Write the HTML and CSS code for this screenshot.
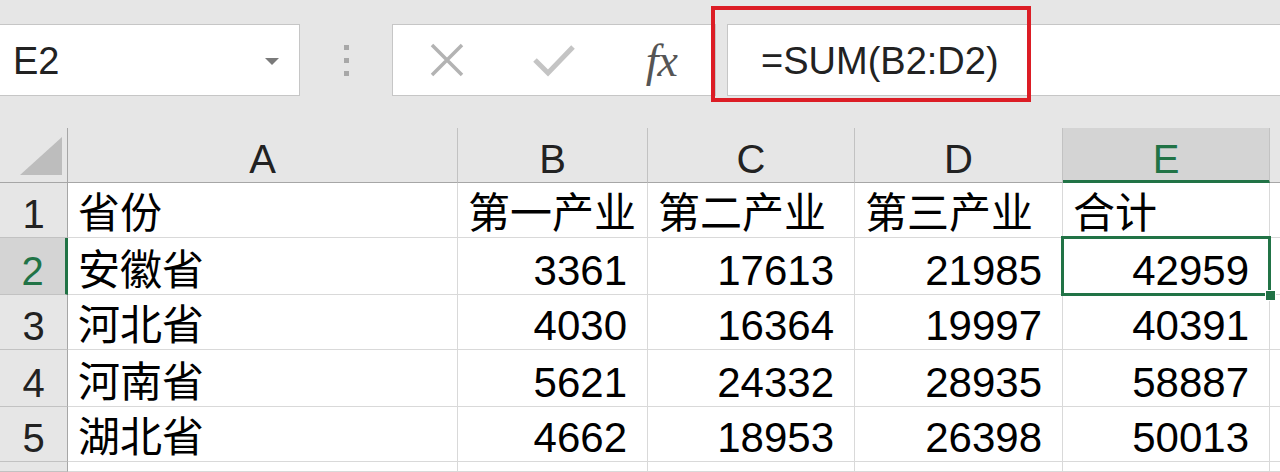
FILE: index.html
```html
<!DOCTYPE html>
<html lang="zh">
<head>
    <meta charset="UTF-8">
    <title>Excel - SUM</title>
    <link rel="stylesheet" href="styles.css">
</head>
<body>
    <div class="formula-bar">
        <div class="name-box">
            <span>E2</span>
            <span class="caret"></span>
        </div>
        <div class="grip"><i></i><i></i><i></i></div>
        <div class="fx-box">
            <div class="slot">
                <svg width="36" height="36" viewBox="0 0 36 36">
                    <path d="M3 3 L33 33 M33 3 L3 33" stroke="#b3b3b3" stroke-width="3.5" fill="none"/>
                </svg>
            </div>
            <div class="slot">
                <svg width="44" height="34" viewBox="0 0 44 34">
                    <path d="M3 17 L16 30 L41 4" stroke="#c4c4c4" stroke-width="5" fill="none"/>
                </svg>
            </div>
            <div class="slot"><span class="fx">fx</span></div>
        </div>
        <div class="formula-input">
            <span class="formula">=SUM(B2:D2)</span>
        </div>
        <div class="highlight"></div>
    </div>

    <div class="sheet">
        <div class="hd corner">
            <svg width="42" height="38" viewBox="0 0 42 38"><path d="M42 0 L42 38 L0 38 Z" fill="#bdbdbd"/></svg>
        </div>
        <div class="hd col">A</div>
        <div class="hd col">B</div>
        <div class="hd col">C</div>
        <div class="hd col">D</div>
        <div class="hd col col-sel">E</div>
        <div class="hd col"></div>

        <div class="hd row">1</div>
        <div class="cell">省份</div>
        <div class="cell">第一产业</div>
        <div class="cell">第二产业</div>
        <div class="cell">第三产业</div>
        <div class="cell">合计</div>
        <div class="cell"></div>

        <div class="hd row row-sel">2</div>
        <div class="cell">安徽省</div>
        <div class="cell num">3361</div>
        <div class="cell num">17613</div>
        <div class="cell num">21985</div>
        <div class="cell num active">42959</div>
        <div class="cell"></div>

        <div class="hd row">3</div>
        <div class="cell">河北省</div>
        <div class="cell num">4030</div>
        <div class="cell num">16364</div>
        <div class="cell num">19997</div>
        <div class="cell num">40391</div>
        <div class="cell"></div>

        <div class="hd row">4</div>
        <div class="cell">河南省</div>
        <div class="cell num">5621</div>
        <div class="cell num">24332</div>
        <div class="cell num">28935</div>
        <div class="cell num">58887</div>
        <div class="cell"></div>

        <div class="hd row">5</div>
        <div class="cell">湖北省</div>
        <div class="cell num">4662</div>
        <div class="cell num">18953</div>
        <div class="cell num">26398</div>
        <div class="cell num">50013</div>
        <div class="cell"></div>

        <div class="hd row"></div>
        <div class="cell"></div>
        <div class="cell"></div>
        <div class="cell"></div>
        <div class="cell"></div>
        <div class="cell"></div>
        <div class="cell"></div>
    </div>
</body>
</html>
```

FILE: styles.css
```css
body {
    margin: 0;
    width: 1280px;
    height: 472px;
    overflow: hidden;
    background: #fff;
    font-family: "Liberation Sans", "Noto Sans CJK SC", sans-serif;
    color: #000;
}

/* formula bar */
.formula-bar {
    position: relative;
    display: flex;
    height: 128px;
    box-sizing: border-box;
    padding: 24px 0 32px;
    background: #e6e6e6;
}

.name-box {
    width: 300px;
    box-sizing: border-box;
    background: #fff;
    border: 1px solid #c6c6c6;
    border-left: none;
    display: flex;
    align-items: center;
    justify-content: space-between;
    padding: 2px 20px 0 13px;
    font-size: 38px;
    color: #222;
}

.caret {
    width: 0;
    height: 0;
    border-left: 7px solid transparent;
    border-right: 7px solid transparent;
    border-top: 7px solid #7a7a7a;
}

.grip {
    width: 92px;
    display: flex;
    flex-direction: column;
    align-items: center;
    justify-content: center;
    gap: 8px;
}

.grip i {
    width: 5px;
    height: 5px;
    background: #a8a8a8;
}

.fx-box {
    width: 324px;
    box-sizing: border-box;
    background: #fff;
    border: 1px solid #c6c6c6;
    display: flex;
}

.slot {
    width: 108px;
    display: flex;
    align-items: center;
    justify-content: center;
}

.fx {
    font-family: "Liberation Serif", serif;
    font-style: italic;
    font-size: 46px;
    color: #555;
    letter-spacing: -1px;
}

.formula-input {
    flex: 1;
    margin-left: 11px;
    background: #fff;
    border: 1px solid #c6c6c6;
    border-right: none;
    display: flex;
    align-items: center;
    padding: 2px 0 0 33px;
    font-size: 38px;
    color: #222;
}

.highlight {
    position: absolute;
    left: 711px;
    top: 6px;
    width: 320px;
    height: 96px;
    box-sizing: border-box;
    border: 4px solid #dc1d25;
}

/* sheet grid */
.sheet {
    display: grid;
    grid-template-columns: 68px 390px 190px 207px 208px 207px 1fr;
    grid-template-rows: 55px 55px 57px 55px 57px 55px 1fr;
    height: 344px;
}

.hd {
    background: #e6e6e6;
    color: #222;
    font-size: 40px;
    line-height: 1;
    box-sizing: border-box;
    display: flex;
    align-items: flex-end;
    justify-content: center;
}

.hd.col {
    border-right: 1px solid #c2c2c2;
    border-bottom: 1px solid #a6a6a6;
    padding-bottom: 3px;
}

.hd.row {
    border-right: 1px solid #a6a6a6;
    border-bottom: 1px solid #c2c2c2;
    padding-bottom: 3px;
}

.hd.corner {
    border-right: 1px solid #a6a6a6;
    border-bottom: 1px solid #a6a6a6;
    align-items: flex-start;
    justify-content: flex-start;
    padding: 9px 0 0 20px;
}

.col-sel {
    background: #d4d4d4;
    color: #217346;
    border-bottom: 3px solid #217346 !important;
    padding-bottom: 1px !important;
}

.row-sel {
    background: #d4d4d4;
    color: #217346;
    border-right: 3px solid #217346 !important;
}

.cell {
    background: #fff;
    border-right: 1px solid #d9d9d9;
    border-bottom: 1px solid #d9d9d9;
    box-sizing: border-box;
    font-size: 42px;
    line-height: 1;
    display: flex;
    align-items: flex-end;
    padding: 0 10px 2px;
    white-space: nowrap;
    overflow: hidden;
}

.num {
    justify-content: flex-end;
    padding-right: 20px;
}

.active {
    position: relative;
    overflow: visible;
    z-index: 1;
}

.active::after {
    content: "";
    position: absolute;
    left: -2px;
    top: -2px;
    right: -2px;
    bottom: -2px;
    border: 3px solid #217346;
}

.active::before {
    content: "";
    position: absolute;
    right: -7px;
    bottom: -7px;
    width: 9px;
    height: 9px;
    background: #217346;
    border: 1px solid #fff;
    z-index: 2;
}
```
